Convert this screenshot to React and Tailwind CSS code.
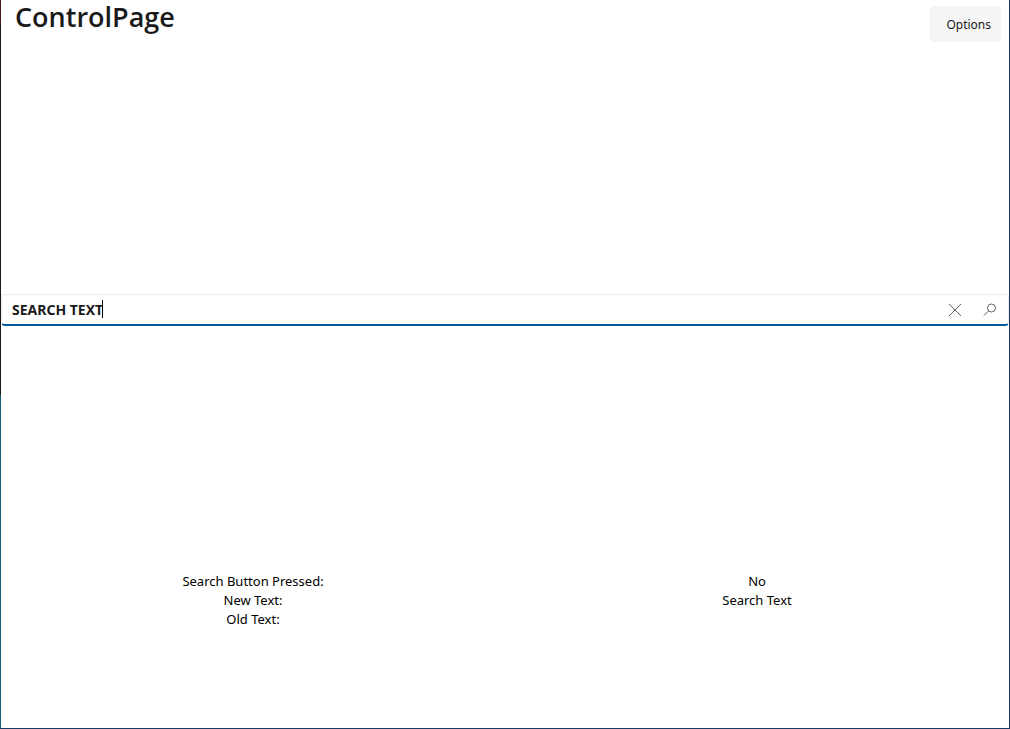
import { useRef, useState } from "react";

function ClearIcon() {
  return (
    <svg width="14" height="14" viewBox="0 0 14 14" fill="none" stroke="#606060" strokeWidth="1" aria-hidden="true">
      <path d="M1 1L13 13M13 1L1 13" />
    </svg>
  );
}

function SearchIcon() {
  return (
    <svg width="14" height="14" viewBox="0 0 14 14" fill="none" stroke="#606060" strokeWidth="1" aria-hidden="true">
      <circle cx="8.5" cy="5" r="4" />
      <path d="M5.6 7.9L1 12.5" />
    </svg>
  );
}

export default function App() {
  const [query, setQuery] = useState("SEARCH TEXT");
  const [state, setState] = useState({ pressed: "No", next: "Search Text", old: "" });
  const [edited, setEdited] = useState(false);
  const input = useRef(null);

  const change = (value) => {
    setState((s) => ({ ...s, next: value, old: query }));
    setQuery(value);
    setEdited(true);
  };

  return (
    <div className="flex min-h-screen border-r border-b border-[#173d66] bg-white font-['Noto_Sans','Open_Sans',sans-serif] text-[#1a1a1a]">
      <div className="flex w-px shrink-0 flex-col" aria-hidden="true">
        <div className="grow-[24] bg-[#4a1a1c]" />
        <div className="grow-[371] bg-[#1b1b1d]" />
        <div className="grow-[333] bg-[#17607c]" />
      </div>
      <div className="flex min-w-0 flex-1 flex-col">
        <header className="flex items-start justify-between pr-2 pl-3.5">
          <h1 className="font-['Open_Sans',sans-serif] text-[27px] leading-[34px] font-semibold">ControlPage</h1>
          <button type="button" className="mt-1.5 h-9 rounded-sm bg-[#f5f5f5] pt-0.5 pr-2.5 pl-4 text-[12px]">
            Options
          </button>
        </header>
        <main className="flex flex-1 flex-col">
          <div className="grow-[252]" />
          <form
            className="relative flex h-8 items-center rounded-sm border border-b-2 border-[#ececec] border-b-[#005a9e] pr-0.5"
            onSubmit={(e) => {
              e.preventDefault();
              setState((s) => ({ ...s, pressed: "Yes" }));
            }}
          >
            <input
              ref={input}
              type="text"
              aria-label="Search"
              value={query}
              onChange={(e) => change(e.target.value)}
              className="h-full min-w-0 flex-1 bg-transparent pl-2.5 text-[14px] font-bold outline-none"
            />
            {!edited && <span className="absolute top-[5px] left-[100px] h-[18px] w-px bg-black" aria-hidden="true" />}
            <button
              type="button"
              aria-label="Clear"
              className="flex h-full w-[38px] items-center justify-center"
              onClick={() => {
                change("");
                input.current.focus();
              }}
            >
              <ClearIcon />
            </button>
            <button type="submit" aria-label="Submit search" className="flex h-full w-8 items-center justify-center">
              <SearchIcon />
            </button>
          </form>
          <div className="grow-[246]" />
          <dl className="grid grid-cols-2 text-center text-[13px] leading-[19px] text-black">
            <dt>Search Button Pressed:</dt>
            <dd>{state.pressed}</dd>
            <dt>New Text:</dt>
            <dd>{state.next}</dd>
            <dt>Old Text:</dt>
            <dd>{state.old}</dd>
          </dl>
          <div className="grow-[99]" />
        </main>
      </div>
    </div>
  );
}
